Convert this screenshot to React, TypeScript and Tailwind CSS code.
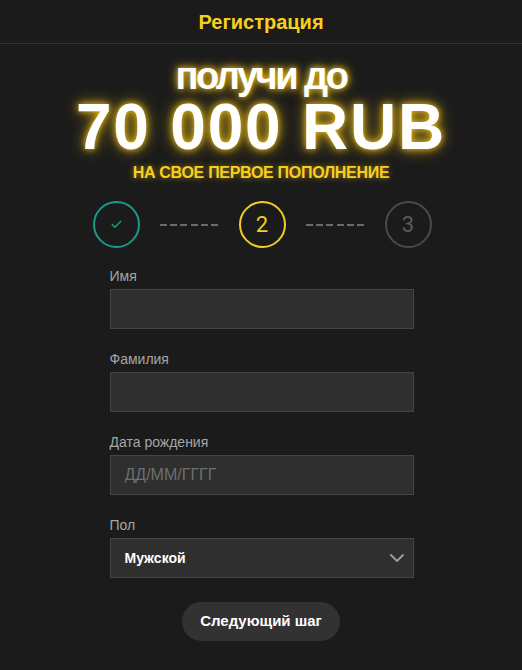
import { ChevronDown, Check } from 'lucide-react'

const fields = [
  { label: 'Имя', placeholder: '' },
  { label: 'Фамилия', placeholder: '' },
  { label: 'Дата рождения', placeholder: 'ДД/ММ/ГГГГ' },
]

const Dashes = () => (
  <div className="flex w-[59px] justify-between">
    {[0, 1, 2, 3, 4, 5].map((i) => (
      <span key={i} className="h-[2px] w-[7px] bg-[#6b6b6b]" />
    ))}
  </div>
)

const App = () => {
  return (
    <div className="min-h-[670px] w-full bg-[#1b1b1b] font-['Liberation_Sans',Arial,sans-serif]">
      <div className="flex h-[44px] items-center justify-center border-b border-[#333333]">
        <h1 className="text-[20px] font-bold text-[#f7cf1d]">Регистрация</h1>
      </div>

      <div className="flex flex-col items-center pt-[13px]">
        <div className="text-[38px] leading-[38px] font-bold tracking-[-2.5px] text-white [text-shadow:0_0_6px_#f5c518,0_0_12px_rgba(245,197,24,0.7)]">
          получи до
        </div>
        <div className="text-[64px] leading-[64px] font-bold tracking-[1.8px] text-white [text-shadow:0_0_7px_#f5c518,0_0_16px_rgba(245,197,24,0.7)]">
          70 000 RUB
        </div>
        <div className="mt-[6px] text-[16px] leading-[16px] font-bold tracking-[-0.3px] text-[#f7cf1d] [text-shadow:0_0_6px_rgba(245,197,24,0.6)]">
          НА СВОЕ ПЕРВОЕ ПОПОЛНЕНИЕ
        </div>
      </div>

      <div className="mt-[20px] flex items-center justify-center gap-[20px] pl-[2px]">
        <div className="flex h-[47px] w-[47px] items-center justify-center rounded-full border-2 border-[#1a9a8a]">
          <Check className="h-[13px] w-[13px] text-[#1a9a8a]" strokeWidth={2.5} />
        </div>
        <Dashes />
        <div className="flex h-[47px] w-[47px] items-center justify-center rounded-full border-2 border-[#f3cd26] font-['Roboto',sans-serif] text-[22px] text-[#f3cd26]">
          2
        </div>
        <Dashes />
        <div className="flex h-[47px] w-[47px] items-center justify-center rounded-full border-2 border-[#4a4a4a] font-['Roboto',sans-serif] text-[22px] text-[#5a5a5a]">
          3
        </div>
      </div>

      <form className="mx-auto mt-[19px] flex w-[305px] flex-col gap-[21px] pl-[1px]">
        {fields.map((field) => (
          <label key={field.label} className="flex flex-col gap-[3px]">
            <span className="text-[14px] leading-[19px] text-[#a6a6a6]">{field.label}</span>
            <input
              placeholder={field.placeholder}
              className="h-[40px] w-full border border-[#454545] bg-[#2f2f2f] px-[14px] text-[16px] text-white outline-none placeholder:text-[#6e6e6e]"
            />
          </label>
        ))}
        <label className="flex flex-col gap-[3px]">
          <span className="text-[14px] leading-[19px] text-[#a6a6a6]">Пол</span>
          <div className="flex h-[40px] w-full items-center justify-between border border-[#454545] bg-[#2f2f2f] pr-[4px] pl-[14px]">
            <span className="text-[14px] font-bold text-white">Мужской</span>
            <ChevronDown className="h-[24px] w-[24px] text-[#9a9a9a]" strokeWidth={2} />
          </div>
        </label>
      </form>

      <div className="mt-[24px] flex justify-center pb-[30px]">
        <button className="h-[39px] w-[158px] rounded-full bg-[#323232] text-[15px] font-bold text-white">
          Следующий шаг
        </button>
      </div>
    </div>
  )
}

export default App
